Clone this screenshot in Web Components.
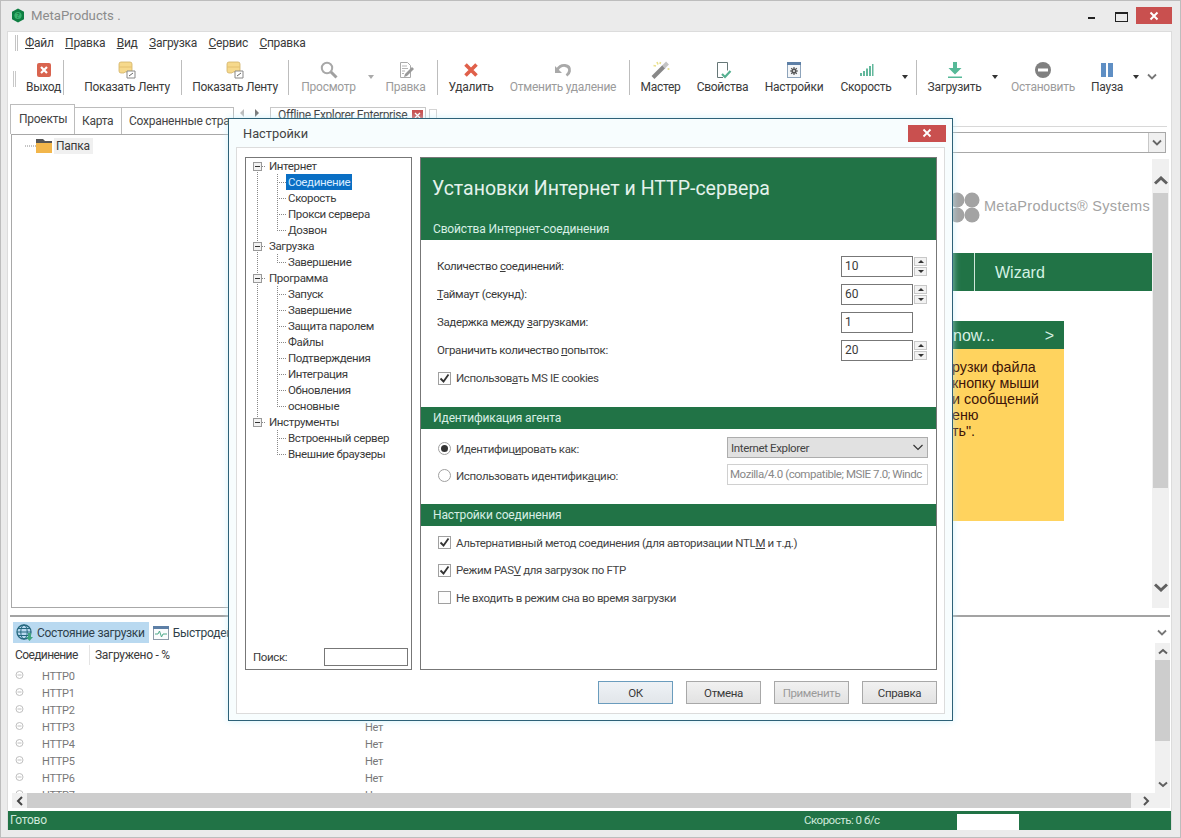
<!DOCTYPE html>
<html lang="ru"><head><meta charset="utf-8"><title>MetaProducts</title>
<style>
html,body{margin:0;padding:0;width:1181px;height:838px;overflow:hidden;background:#ebebeb}
body{font:12px Roboto,"Open Sans",sans-serif;color:#3a3a3a;letter-spacing:-.27px}
u{text-underline-offset:1px}
</style></head><body>
<app-window>
  <title-bar></title-bar>
  <app-client>
    <menu-bar><menu-item><u>Ф</u>айл</menu-item><menu-item><u>П</u>равка</menu-item><menu-item><u>В</u>ид</menu-item><menu-item><u>З</u>агрузка</menu-item><menu-item><u>С</u>ервис</menu-item><menu-item><u>С</u>правка</menu-item></menu-bar>
    <tool-bar>
      <tool-btn style="--w:39px"><svg slot="icon" width="16" height="16" viewBox="0 0 16 16"><rect x="1" y="1" width="14" height="14" rx="2" fill="#d9644f"/><path d="M5 5l6 6M11 5l-6 6" stroke="#fff" stroke-width="2.2"/></svg>Выход</tool-btn>
      <tool-sep></tool-sep>
      <tool-btn style="--w:108px;margin-left:9px"><svg slot="icon" width="20" height="18" viewBox="0 0 20 18"><path d="M2 3q0-2 2-2h9q2 0 2 2v7q0 1-1 1H8l-1 1H4q-2 0-2-2z" fill="#f6d98c" stroke="#d2b268" stroke-width=".8"/><path d="M2 6h13" stroke="#e4c071" stroke-width="1"/><path d="M10 10h8v7h-8z" fill="#fff" stroke="#888"/><path d="M12 15l4-3" stroke="#666"/></svg>Показать Ленту</tool-btn>
      <tool-sep></tool-sep>
      <tool-btn style="--w:106px"><svg slot="icon" width="20" height="18" viewBox="0 0 20 18"><path d="M2 3q0-2 2-2h9q2 0 2 2v7q0 1-1 1H8l-1 1H4q-2 0-2-2z" fill="#f6d98c" stroke="#d2b268" stroke-width=".8"/><path d="M2 6h13" stroke="#e4c071" stroke-width="1"/><path d="M10 10h8v7h-8z" fill="#fff" stroke="#888"/><path d="M12 15l4-3" stroke="#666"/></svg>Показать Ленту</tool-btn>
      <tool-sep></tool-sep>
      <tool-btn disabled style="--w:79px"><svg slot="icon" width="18" height="18" viewBox="0 0 18 18"><circle cx="7" cy="7" r="5.2" fill="none" stroke="#a8a8a8" stroke-width="2"/><path d="M11 11l5.5 5.5" stroke="#a0a0a0" stroke-width="3"/></svg>Просмотр</tool-btn>
      <drop-arrow disabled style="--w:6px"></drop-arrow>
      <tool-btn disabled style="--w:63px"><svg slot="icon" width="18" height="18" viewBox="0 0 18 18"><path d="M3.5 1.5h7l3 3v12h-10z" fill="#fff" stroke="#aaa"/><path d="M5 5h5M5 7.5h6M5 10h3M5 12.5h2" stroke="#b5b5b5"/><path d="M8 13l7-7 2 2-7 7-3 1z" fill="#999"/></svg>Правка</tool-btn>
      <tool-sep></tool-sep>
      <tool-btn style="--w:66px"><svg slot="icon" width="16" height="16" viewBox="0 0 16 16"><path d="M2.5 2.5l11 11M13.5 2.5l-11 11" stroke="#e0604a" stroke-width="3.6"/></svg>Удалить</tool-btn>
      <tool-btn disabled style="--w:118px;margin-right:7px"><svg slot="icon" width="18" height="16" viewBox="0 0 18 16"><path d="M3 8q3-5 8-4.5 5 .5 4.500 5.500-.3 2.500-3 4.500" fill="none" stroke="#a9a9a9" stroke-width="2.800"/><path d="M1 4v7h7z" fill="#a9a9a9"/></svg>Отменить удаление</tool-btn>
      <tool-sep></tool-sep>
      <tool-btn style="--w:61px"><svg slot="icon" width="20" height="18" viewBox="0 0 20 18"><path d="M2 16.500L13 5.500" stroke="#888" stroke-width="4"/><path d="M12.500 6L16.500 2" stroke="#c4c4c4" stroke-width="4"/><path d="M6 1l1 2.500M2.500 4.500l2.500 .5M9.500 1l-.5 2" stroke="#e9e08c" stroke-width="1.600"/><circle cx="17.500" cy="8" r="1.100" fill="#e9e08c"/></svg>Мастер</tool-btn>
      <tool-btn style="--w:63px"><svg slot="icon" width="18" height="18" viewBox="0 0 18 18"><path d="M9 16.500H3.500v-15h10v8" fill="none" stroke="#677" stroke-width="1"/><path d="M8 13l3 3 5.500-6" fill="none" stroke="#55b090" stroke-width="2.200"/></svg>Свойства</tool-btn>
      <tool-btn style="--w:80px"><svg slot="icon" width="18" height="18" viewBox="0 0 18 18"><rect x="2.500" y="1.500" width="13" height="15" fill="#f4f6f8" stroke="#8ea4bb"/><rect x="2" y="1" width="14" height="3" fill="#5d7fa6"/><circle cx="9" cy="10" r="2.600" fill="#555"/><path d="M9 6v8M5 10h8M6.200 7.200l5.600 5.600M11.800 7.200l-5.600 5.600" stroke="#555" stroke-width="1.200"/><circle cx="9" cy="10" r="1" fill="#eee"/></svg>Настройки</tool-btn>
      <tool-btn style="--w:64px"><svg slot="icon" width="16" height="16" viewBox="0 0 16 16"><path d="M2 11h2v3H2zM5 9h2v5H5zM8 6.500h2V14H8zM11 4h2v10h-2z" fill="#63b89c"/><path d="M14 2h1.500v12H14z" fill="#63b89c"/></svg>Скорость</tool-btn>
      <drop-arrow style="--w:14px;margin-right:4px"></drop-arrow>
      <tool-sep></tool-sep>
      <tool-btn style="--w:75px"><svg slot="icon" width="18" height="18" viewBox="0 0 18 18"><path d="M7 1h4v6h4.500L9 13.500 2.500 7H7z" fill="#56b998"/><path d="M2 15.500h14v1.500H2z" fill="#56b998"/></svg>Загрузить</tool-btn>
      <drop-arrow style="--w:6px"></drop-arrow>
      <tool-btn disabled style="--w:90px"><svg slot="icon" width="18" height="18" viewBox="0 0 18 18"><circle cx="9" cy="9" r="8" fill="#808080"/><rect x="4" y="7.500" width="10" height="3" fill="#fff"/></svg>Остановить</tool-btn>
      <tool-btn style="--w:38px"><svg slot="icon" width="16" height="16" viewBox="0 0 16 16"><path d="M2 1h5v14H2zM9 1h5v14H9z" fill="#5f8fc4"/></svg>Пауза</tool-btn>
      <drop-arrow style="--w:20px"></drop-arrow>
      <chevron-mark style="--w:12px"></chevron-mark>
    </tool-bar>
    <main-area>
      <left-pane>
        <tab-row>
          <page-tab active style="--w:65px">Проекты</page-tab>
          <page-tab style="--w:47px">Карта</page-tab>
          <page-tab style="--w:112px">Сохраненные стра</page-tab>
        </tab-row>
        <project-tree>
          <svg width="28" height="16" viewBox="0 0 28 16"><path d="M0 8h11" stroke="#888" stroke-dasharray="1 1"/><path d="M11 1h7l2 2h7v3H11z" fill="#555"/><path d="M11 5h16v10H11z" fill="#f2b64b"/></svg><span>Папка</span>
        </project-tree>
      </left-pane>
      <right-pane>
        <doc-strip>Offline Explorer Enterprise</doc-strip>
        <address-box></address-box>
        <page-frame>
          <web-page>
            <logo-row>MetaProducts® Systems</logo-row>
            <nav-band>Wizard</nav-band>
            <tip-box heading="now...">
              <div>рузки файла</div><div>кнопку мыши</div><div>и сообщений</div><div>еню</div><div>ть".</div>
            </tip-box>
          </web-page>
          <scroll-bar big style="--thumb:295px"></scroll-bar>
        </page-frame>
      </right-pane>
    </main-area>
    <h-split></h-split>
    <bottom-pane>
      <span slot="tab"><bottom-tab active><svg slot="icon" width="18" height="18" viewBox="0 0 18 18"><circle cx="8" cy="8" r="7" fill="none" stroke="#25687f" stroke-width="1.300"/><ellipse cx="8" cy="8" rx="3.200" ry="7" fill="none" stroke="#25687f"/><path d="M1 8h14M2 4.500h12M2 11.500h12" stroke="#25687f"/><path d="M12 9h3v4h2l-3.500 4-3.500-4h2z" fill="#3fa37f"/></svg>Состояние загрузки</bottom-tab></span>
      <span slot="tab"><bottom-tab><svg slot="icon" width="18" height="18" viewBox="0 0 18 18"><rect x="1.500" y="2.500" width="15" height="13" fill="#fbfcfd" stroke="#8d9aa8"/><rect x="1" y="2" width="16" height="3" fill="#5d7fa6"/><path d="M3 10h3l1.500-3 2 6 1.500-3h4" fill="none" stroke="#4faa8a"/></svg>Быстродей</bottom-tab></span>
      <status-list>
        <conn-row name="HTTP0"></conn-row><conn-row name="HTTP1"></conn-row><conn-row name="HTTP2"></conn-row>
        <conn-row name="HTTP3" value="Нет"></conn-row><conn-row name="HTTP4" value="Нет"></conn-row><conn-row name="HTTP5" value="Нет"></conn-row><conn-row name="HTTP6" value="Нет"></conn-row><conn-row name="HTTP7" value="Нет"></conn-row>
      </status-list>
      <scroll-bar slot="v" style="--thumb:81px"></scroll-bar>
    </bottom-pane>
    <status-bar></status-bar>
  </app-client>
  <settings-dialog>
    <tree-group><span slot="label">Интернет</span><tree-leaf selected>Соединение</tree-leaf><tree-leaf>Скорость</tree-leaf><tree-leaf>Прокси сервера</tree-leaf><tree-leaf>Дозвон</tree-leaf></tree-group>
    <tree-group><span slot="label">Загрузка</span><tree-leaf>Завершение</tree-leaf></tree-group>
    <tree-group><span slot="label">Программа</span><tree-leaf>Запуск</tree-leaf><tree-leaf>Завершение</tree-leaf><tree-leaf>Защита паролем</tree-leaf><tree-leaf>Файлы</tree-leaf><tree-leaf>Подтверждения</tree-leaf><tree-leaf>Интеграция</tree-leaf><tree-leaf>Обновления</tree-leaf><tree-leaf>основные</tree-leaf></tree-group>
    <tree-group last><span slot="label">Инструменты</span><tree-leaf>Встроенный сервер</tree-leaf><tree-leaf>Внешние браузеры</tree-leaf></tree-group>

    <settings-panel slot="panel">
      <section-head big slot="head">Установки Интернет и HTTP-сервера</section-head>
      <section-head>Свойства Интернет-соединения</section-head>
      <form-section style="--pt:12px;--h:167px">
        <form-row><span>Количество <u>с</u>оединений:</span><spin-input value="10" spin></spin-input></form-row>
        <form-row><span><u>Т</u>аймаут (секунд):</span><spin-input value="60" spin></spin-input></form-row>
        <form-row><span>Задержка между <u>з</u>агрузками:</span><spin-input value="1"></spin-input></form-row>
        <form-row><span>Ограничить количество <u>п</u>опыток:</span><spin-input value="20" spin></spin-input></form-row>
        <check-row checked>Использов<u>а</u>ть MS IE cookies</check-row>
      </form-section>
      <section-head>Идентификация агента</section-head>
      <form-section style="--pt:5px;--h:75px">
        <radio-row checked style="--rh:27px"><span>Идентифиц<u>и</u>ровать как:</span><select-box slot="ctl">Internet Explorer</select-box></radio-row>
        <radio-row style="--rh:27px"><span>Использовать идентифик<u>а</u>цию:</span><agent-input slot="ctl">Mozilla/4.0 (compatible; MSIE 7.0; Windc</agent-input></radio-row>
      </form-section>
      <section-head>Настройки соединения</section-head>
      <form-section style="--pt:3px;--h:143px;--ch:27.500px">
        <check-row checked>Альтернативный метод соединения (для авторизации NTL<u>M</u> и т.д.)</check-row>
        <check-row checked>Режим PAS<u>V</u> для загрузок по FTP</check-row>
        <check-row>Не входить в режим сна во время загрузки</check-row>
      </form-section>
    </settings-panel>
    <dlg-button slot="btn" default>ОК</dlg-button>
    <dlg-button slot="btn">Отмена</dlg-button>
    <dlg-button slot="btn" disabled>Применить</dlg-button>
    <dlg-button slot="btn">Справка</dlg-button>
  </settings-dialog>
</app-window>
<script>
const def=(name,css,html,after)=>customElements.define(name,class extends HTMLElement{
  constructor(){super();this.attachShadow({mode:'open'}).innerHTML=`<style>${css}</style>${typeof html==='function'?'':html}`;}
  connectedCallback(){ if(typeof html==='function'&&!this._d){this._d=1;this.shadowRoot.innerHTML+=html(this);} }
});
const GREEN='#217346';
def('app-window',`:host{display:block;position:relative;width:1181px;height:838px;box-sizing:border-box;border:1px solid #bdbdbd;background:#ebebeb}`,`<slot></slot>`);
def('title-bar',`:host{display:flex;align-items:center;height:30px;padding-left:10px;color:#8c8c8c;font-size:13.200px;line-height:28px;letter-spacing:0}
 svg{margin-right:6px;margin-top:-2px}.sp{flex:1}
 .c{display:flex;align-items:flex-start;height:30px}
 .m{width:7px;height:2px;background:#222;margin:16px 20px 0 0}
 .x{width:11px;height:7px;border:1px solid #222;border-top-width:2px;margin:11px 8px 0 0;box-sizing:content-box}
 .r{width:36px;height:17px;background:#c9504f;margin:6px 8px 0 0;display:flex;align-items:center;justify-content:center}`,
 `<svg width="14" height="15" viewBox="0 0 14 15"><path d="M7 .5l6 3.200v7.600L7 14.500 1 11.300V3.700z" fill="#0f7f43"/><circle cx="7" cy="7.500" r="3.600" fill="#39b56f"/><text x="7" y="10" text-anchor="middle" font-size="7" fill="#0b5a30" font-family="Open Sans">?</text></svg><span>MetaProducts .</span><div class="sp"></div>
 <div class="c"><div class="m"></div><div class="x"></div><div class="r"><svg style="margin:0" width="10" height="10" viewBox="0 0 10 10"><path d="M1.500 1.500l7 7M8.500 1.500l-7 7" stroke="#fff" stroke-width="2"/></svg></div></div>`);
def('app-client',`:host{display:block;margin-left:6px;width:1165px;height:799px;box-sizing:border-box;background:#fff;border-left:1px solid #dcdcdc;border-right:1px solid #dcdcdc;border-top:1px solid #dcdcdc}`,`<slot></slot>`);
def('menu-bar',`:host{display:flex;align-items:flex-start;height:23px;padding-left:7px;padding-top:3px;box-sizing:border-box}
 i{width:1px;height:16px;border-left:1px solid #c4c4c4;border-right:1px solid #c4c4c4;margin-right:7px}
 .w{display:flex;gap:11.500px}`,`<i></i><div class="w"><slot></slot></div>`);
def('menu-item',`:host{display:block;line-height:16px;white-space:nowrap}`,`<slot></slot>`);
def('tool-bar',`:host{display:flex;height:49px;padding-top:1px;box-sizing:border-box;align-items:flex-start}
 i{display:block;width:1px;height:16px;border-left:1px solid #c8c8c8;border-right:1px solid #c8c8c8;margin:15px 8px 0 5px;box-sizing:content-box;flex:none}`,`<i></i><slot></slot>`);
def('tool-btn',`:host{display:flex;flex-direction:column;align-items:center;flex:none;width:var(--w);height:46px;white-space:nowrap;overflow:visible}
 :host([disabled]){color:#9b9b9b}
 .i{height:20px;margin-top:4px;display:flex;align-items:center;justify-content:center}
 .t{line-height:16px;margin-top:-1px}`,`<div class="i"><slot name="icon"></slot></div><div class="t"><slot></slot></div>`);
def('tool-sep',`:host{display:block;flex:none;width:1px;height:35px;margin-top:4px;background:#bdbdbd}`,``);
def('drop-arrow',`:host{display:block;flex:none;width:var(--w);height:46px;position:relative;overflow:visible}
 i{position:absolute;left:50%;top:19px;margin-left:-3px;border:3px solid transparent;border-top:4px solid #333;border-bottom:0}
 :host([disabled]) i{border-top-color:#aaa}`,`<i></i>`);
def('chevron-mark',`:host{display:flex;flex:none;width:var(--w);justify-content:center;padding-top:17px}`,`<svg width="10" height="8" viewBox="0 0 10 8"><path d="M1 1.500l4 4 4-4" fill="none" stroke="#777" stroke-width="1.800"/></svg>`);
def('main-area',`:host{display:flex;height:505px;padding-left:2px}`,`<slot></slot>`);
def('left-pane',`:host{display:flex;flex-direction:column;width:225px;flex:none}`,`<slot></slot>`);
def('tab-row',`:host{display:flex;height:30px;align-items:flex-end;white-space:nowrap;overflow:hidden;flex:none}`,`<slot></slot>`);
def('page-tab',`:host{display:block;flex:none;box-sizing:border-box;width:var(--w);height:27px;border:1px solid #bcbcbc;border-bottom:0;border-left:0;padding-left:7px;line-height:26px;color:#444;overflow:hidden}
 :host([active]){height:30px;border-left:1px solid #bcbcbc;background:#fff;padding-left:8px;line-height:28px}`,`<slot></slot>`);
def('project-tree',`:host{display:block;flex:1;margin-left:1px;border:1px solid #a8a8a8;border-bottom-width:1px;margin-bottom:1px;padding-top:3px;padding-left:13px;height:100%;box-sizing:border-box}
 .r{display:flex;align-items:center;height:16px} .b{background:#f0f0f0;padding:0 3px 0 2px;margin-left:1px;line-height:16px}`,
 ()=>``);
def('right-pane',`:host{display:flex;flex-direction:column;flex:1;min-width:0}`,`<slot></slot>`);
def('doc-strip',`:host{display:flex;align-items:flex-end;height:22px;flex:none;padding-left:2px;margin-right:4px;border-bottom:1px solid #d8d8d8;box-sizing:content-box;margin-bottom:0}
 .a{width:10px;height:100%;position:relative}.a+.a{margin:0 8px 0 5px}
 .a i{position:absolute;left:3px;top:5px;border:4px solid transparent;border-right:4px solid #bbb;border-left:0}
 .a+.a i{border-right:0;border-left:4px solid #777}
 .t{box-sizing:border-box;width:156px;height:19px;border:1px solid #c8c8c8;border-bottom:0;display:flex;padding-left:7px;line-height:15px;white-space:nowrap;letter-spacing:-.37px}
 .t span{flex:1}.x{width:11px;height:10px;background:#c9504f;margin:2px 2px 0 0;display:flex;align-items:center;justify-content:center}
 .s{width:8px;height:10px;border:1px solid #d4d4d4;margin:0 0 7px 3px;box-sizing:border-box}`,
 `<div class="a"><i></i></div><div class="a"><i></i></div><div class="t"><span><slot></slot></span><div class="x"><svg width="7" height="7" viewBox="0 0 7 7"><path d="M1 1l5 5M6 1L1 6" stroke="#fff" stroke-width="1.300"/></svg></div></div><div class="s"></div>`);
def('address-box',`:host{display:flex;justify-content:flex-end;height:21px;margin:5px 5px 0 0;border:1px solid #a8a8a8;box-sizing:border-box;flex:none}
 div{width:16px;background:#f0f0f0;border-left:1px solid #c8c8c8;display:flex;align-items:center;justify-content:center}`,
 `<div><svg width="10" height="8" viewBox="0 0 10 8"><path d="M1 1.500l4 4 4-4" fill="none" stroke="#666" stroke-width="1.800"/></svg></div>`);
def('page-frame',`:host{display:flex;flex:1;min-height:0;margin:6px 2px 1px 0}`,`<slot></slot>`);
def('web-page',`:host{display:flex;flex-direction:column;flex:1;min-width:0;align-items:flex-end;letter-spacing:0}`,`<slot></slot>`);
def('logo-row',`:host{display:flex;align-items:flex-start;height:94px;font:14.500px "Liberation Sans",sans-serif;color:#a3a3a3;white-space:nowrap}
 svg{margin:33px 4px 0 0} span{margin-top:39px;margin-right:2px;letter-spacing:.3px}`,
 `<svg width="31" height="31" viewBox="0 0 31 31"><g fill="#a3a3a3"><circle cx="8" cy="8" r="7.500"/><circle cx="23" cy="8" r="7.500"/><circle cx="8" cy="23" r="7.500"/><circle cx="23" cy="23" r="7.500"/></g></svg><span><slot></slot></span>`);
def('nav-band',`:host{display:flex;justify-content:flex-end;align-self:stretch;height:38px;background:${GREEN};font:16px "Liberation Sans",sans-serif;color:#d4f2e4;flex:none}
 div{width:178px;box-sizing:border-box;border-left:1px solid #cfe6da;padding-left:20px;line-height:39px}`,`<div><slot></slot></div>`);
def('tip-box',`:host{display:block;width:124px;margin:30px 88px 0 0;font:14.300px/16px "Liberation Sans",sans-serif;color:#3d1408;flex:none}
 .h{height:28px;background:${GREEN};color:#d8efe4;font-size:16px;line-height:29px;padding:0 10px 0 13px;display:flex;justify-content:space-between}
 .b{height:172px;box-sizing:border-box;background:#ffd35e;padding:10px 0 0 12px;white-space:nowrap}`,
 h=>`<div class="h"><span>${h.getAttribute('heading')}</span><span>&gt;</span></div><div class="b"><slot></slot></div>`);
def('scroll-bar',`:host{display:flex;flex-direction:column;flex:none;width:15px;background:#f0f0f0;align-items:center}
 :host([big]){width:17px;padding:9px 0 8px;box-sizing:border-box}
 .b{height:17px;flex:none;display:flex;align-items:center;justify-content:center}
 :host([big]) .b{height:25px}
 .t{flex:1;width:100%;min-height:0}
 :host([big]) .t{width:15px}
 .u{height:var(--thumb);background:#cdcdcd}`,
 h=>{const big=h.hasAttribute('big');const w=big?14:10,hh=big?9:7,sw=big?3:2;
  const sv=d=>`<svg width="${w}" height="${hh}" viewBox="0 0 ${w} ${hh}"><path d="${d}" fill="none" stroke="#606060" stroke-width="${sw}"/></svg>`;
  return `<div class="b">${sv(`M1 ${hh-1.5}L${w/2} 2L${w-1} ${hh-1.5}`)}</div><div class="t"><div class="u"></div></div><div class="b">${sv(`M1 1.500L${w/2} ${hh-2}L${w-1} 1.500`)}</div>`});
def('h-split',`:host{display:block;height:2px;margin:6px 1px 0 2px;background:#a3a3a3}`,``);
def('bottom-pane',`:host{display:flex;flex-direction:column;height:191px;margin-left:2px;margin-right:1px;flex:none}
 .tabs{display:flex;height:26px;align-items:flex-start;flex:none;padding:5px 0 0 3px;box-sizing:border-box;position:relative}
 .mid{display:flex;height:150px;flex:none}
 .l{flex:1;min-width:0}
 .chev{position:absolute;right:3px;top:12px}
 .h{display:flex;flex:none;height:15px;margin-left:2px;background:#f0f0f0}
 .h .btn{width:15px;display:flex;align-items:center;justify-content:center;flex:none}
 .h .th{width:1104px;background:#cdcdcd;flex:none}
 .h .sp{flex:1;display:flex;align-items:center;justify-content:flex-end;padding-right:20px}`,
 `<div class="tabs"><slot name="tab"></slot><svg class="chev" width="10" height="8" viewBox="0 0 10 8"><path d="M1 1.500l4 4 4-4" fill="none" stroke="#777" stroke-width="1.800"/></svg></div>
  <div class="mid"><div class="l"><slot></slot></div><slot name="v"></slot></div>
  <div class="h"><div class="btn"><svg width="7" height="10" viewBox="0 0 7 10"><path d="M6 1L2 5l4 4" fill="none" stroke="#444" stroke-width="2"/></svg></div><div class="th"></div><div class="sp"><svg width="7" height="10" viewBox="0 0 7 10"><path d="M1 1l4 4-4 4" fill="none" stroke="#555" stroke-width="2"/></svg></div></div>`);
def('bottom-tab',`:host{display:inline-flex;align-items:center;height:21px;padding:0 4px 0 0;white-space:nowrap;color:#2f3f4a}
 :host([active]){background:#b9d9f0;margin-right:3px;padding-left:3px}
 .i{display:flex;margin-right:3px}`,`<div class="i"><slot name="icon"></slot></div><slot></slot>`);
def('status-list',`:host{display:block;height:150px;overflow:hidden}
 .h{display:flex;height:20px;margin-top:2px;line-height:20px;padding-left:5px}
 .a{width:74px;border-right:1px solid #e4e4e4;box-sizing:content-box;letter-spacing:-.6px}.b{padding-left:5px}
 .list{height:128px;overflow:hidden;padding-top:3px;box-sizing:border-box}`,
 `<div class="h"><div class="a">Соединение</div><div class="b">Загружено - %</div></div><div class="list"><slot></slot></div>`);
def('conn-row',`:host{display:flex;align-items:center;height:17px;padding-left:5px;color:#777;font-size:11px;letter-spacing:-.3px}
 svg{flex:none}.n{width:323px;flex:none}`,
 h=>`<svg width="27" height="17" viewBox="0 0 27 17"><circle cx="4.500" cy="7" r="3.500" fill="none" stroke="#c0c0c0"/><path d="M2.500 7h4" stroke="#c0c0c0"/></svg><div class="n">${h.getAttribute('name')}</div><div>${h.getAttribute('value')||''}</div>`);
def('status-bar',`:host{display:flex;height:19px;margin:3px 0 0 0;background:${GREEN};color:#cfe9db;line-height:19px;white-space:nowrap;font-size:12px}
 .a{width:796px;box-sizing:border-box;padding-left:2px}.b{width:153px;font-size:11.500px;letter-spacing:-.5px}.c{width:62px;height:16px;margin-top:3px;background:#fff}`,
 `<div class="a">Готово</div><div class="b">Скорость: 0 б/с</div><div class="c"></div>`);
def('settings-dialog',`:host{position:absolute;left:227px;top:117px;z-index:5;display:block;box-sizing:border-box;width:725px;height:603px;border:1px solid #2d6178;background:#f7fdfe;box-shadow:0 0 7px rgba(190,235,250,.7);font-size:11.500px;letter-spacing:-.36px}
 .tb{height:28px;display:flex;align-items:center;padding-left:14px;font-size:12.800px;letter-spacing:0;color:#444}
 .tb span{flex:1}.x{width:38px;height:17px;background:#c9504f;margin-right:6px;display:flex;align-items:center;justify-content:center}
 .body{box-sizing:border-box;margin:0 7px 0 7px;height:567px;border:1px solid #dcdcdc;background:#fff;padding:9px 7px 0 8px}
 .cols{display:flex;gap:8px;height:513px}
 .tree{box-sizing:border-box;width:167px;border:1px solid #777;display:flex;flex-direction:column;flex:none}
 .items{flex:1}
 .s{display:flex;align-items:center;height:18px;padding-left:7px;margin-bottom:3px}
 .s span{width:71px}.s div{width:84px;height:18px;box-sizing:border-box;border:1px solid #777}
 .p{flex:1;min-width:0}
 .foot{display:flex;justify-content:flex-end;gap:13px;margin-top:11px}`,
 `<div class="tb"><span>Настройки</span><div class="x"><svg width="10" height="10" viewBox="0 0 10 10"><path d="M1.500 1.500l7 7M8.500 1.500l-7 7" stroke="#fff" stroke-width="1.800"/></svg></div></div>
  <div class="body"><div class="cols"><div class="tree"><div class="items"><slot></slot></div><div class="s"><span>Поиск:</span><div></div></div></div><div class="p"><slot name="panel"></slot></div></div>
  <div class="foot"><slot name="btn"></slot></div></div>`);
const DOT='repeating-linear-gradient(to bottom,#888 0 1px,transparent 1px 2px)';
const DOTH='repeating-linear-gradient(to right,#888 0 1px,transparent 1px 2px)';
def('tree-group',`:host{display:block;position:relative}
 :host::before{content:"";position:absolute;left:11px;top:8px;bottom:-8px;width:1px;background:${DOT}}
 :host([last])::before{display:none}
 .h{display:flex;align-items:center;height:16px;position:relative;padding-left:7px;line-height:16px}
 .e{width:9px;height:9px;box-sizing:border-box;border:1px solid #999;background:#f2f2f2;position:relative;flex:none;z-index:1}
 .e::after{content:"";position:absolute;left:1px;right:1px;top:3px;height:1px;background:#333}
 .d{width:4px;height:1px;margin:0 3px 0 0;background:${DOTH};flex:none}
 .k{display:block}`,
 `<div class="h"><div class="e"></div><div class="d"></div><slot name="label"></slot></div><div class="k"><slot></slot></div>`);
def('tree-leaf',`:host{display:flex;align-items:center;position:relative;height:16px;padding-left:31px;line-height:16px;white-space:nowrap}
 :host::before{content:"";position:absolute;left:31px;top:0;bottom:0;width:1px;background:${DOT}}
 :host(:last-child)::before{bottom:8px}
 i{width:9px;height:1px;background:${DOTH};flex:none}
 span{padding:0 2px 0 2px;margin-left:0}
 :host([selected]) span{background:#0a6fc4;color:#d9ecff}`,`<i></i><span><slot></slot></span>`);
def('settings-panel',`:host{display:block;box-sizing:border-box;height:513px;border:1px solid #777}`,`<slot name="head"></slot><slot></slot>`);
def('section-head',`:host{display:flex;align-items:center;height:22px;padding-left:12px;background:${GREEN};color:#d8efe4;font-size:12px;letter-spacing:-.15px}
 :host([big]){height:60px;font-size:19.500px;padding-left:11px;color:#e4f2ec;letter-spacing:0}`,`<slot></slot>`);
def('form-section',`:host{display:block;box-sizing:border-box;height:var(--h);padding:var(--pt) 0 0 16px}`,`<slot></slot>`);
def('form-row',`:host{display:flex;justify-content:space-between;align-items:center;height:28px;padding-right:8px}`,`<slot></slot>`);
def('spin-input',`:host{display:flex;align-items:center;width:87px;gap:1px;font-size:12px;letter-spacing:0}
 .i{width:72px;height:21px;box-sizing:border-box;border:1px solid #777;padding-left:3px;line-height:19px}
 .s{display:flex;flex-direction:column;gap:1px;width:13px}
 .s div{height:9px;border:1px solid #c8c8c8;background:#f2f2f2;box-sizing:border-box;display:flex;align-items:center;justify-content:center}
 .up{width:0;border:3px solid transparent;border-bottom:3px solid #333;border-top:0}
 .dn{width:0;border:3px solid transparent;border-top:3px solid #333;border-bottom:0}`,
 h=>`<div class="i">${h.getAttribute('value')}</div>${h.hasAttribute('spin')?'<div class="s"><div><i class="up"></i></div><div><i class="dn"></i></div></div>':''}`);
def('check-row',`:host{display:flex;align-items:center;height:var(--ch,28px);color:#444;white-space:nowrap}
 .b{width:13px;height:13px;box-sizing:border-box;margin:0 5px 0 1px;border:1px solid #a0a0a0;background:#fdfdfd;display:flex;flex:none}`,
 h=>`<div class="b">${h.hasAttribute('checked')?'<svg width="11" height="11" viewBox="0 0 11 11"><path d="M1.500 5.500l3 3 5-7" fill="none" stroke="#333" stroke-width="1.800"/></svg>':''}</div><span><slot></slot></span>`);
def('radio-row',`:host{display:flex;align-items:center;height:var(--rh);padding-right:8px;color:#444}
 .c{width:13px;height:13px;box-sizing:border-box;margin:1px 5px 0 1px;border:1px solid #a0a0a0;border-radius:50%;background:#fff;display:flex;align-items:center;justify-content:center;flex:none}
 .c i{width:7px;height:7px;border-radius:50%;background:#333}
 .l{flex:1;padding-top:2px}`,
 h=>`<div class="c">${h.hasAttribute('checked')?'<i></i>':''}</div><div class="l"><slot></slot></div><slot name="ctl"></slot>`);
def('select-box',`:host{display:flex;align-items:center;justify-content:space-between;width:201px;height:21px;box-sizing:border-box;border:1px solid #adadad;background:#e1e1e1;padding:0 4px 0 3px;white-space:nowrap}`,
 `<span><slot></slot></span><svg width="10" height="7" viewBox="0 0 10 7"><path d="M.5 1l4.500 4.500L9.500 1" fill="none" stroke="#333" stroke-width="1.200"/></svg>`);
def('agent-input',`:host{display:block;width:201px;height:21px;box-sizing:border-box;border:1px solid #d0d0d0;padding:0 0 0 2px;line-height:19px;color:#888;white-space:nowrap;overflow:hidden;letter-spacing:-.44px}`,`<slot></slot>`);
def('dlg-button',`:host{display:flex;align-items:center;justify-content:center;width:75px;height:23px;box-sizing:border-box;border:1px solid #a8a8a8;background:linear-gradient(#f1f1f1,#e2e2e2)}
 :host([default]){border-color:#6a9cbd;background:linear-gradient(#eef2f6,#e2e6ea)}
 :host([disabled]){color:#9a9a9a}`,`<slot></slot>`);
</script>
<script>
(function(){
  const t=document.querySelector('project-tree');
  const kids=[...t.children];
  const row=document.createElement('div');row.className='r';
  const svg=kids[0];const lbl=kids[1];
  const b=document.createElement('div');b.className='b';b.textContent=lbl.textContent;
  t.textContent='';
  row.append(svg,b);t.shadowRoot.append(row);
})();
</script>
</body></html>
